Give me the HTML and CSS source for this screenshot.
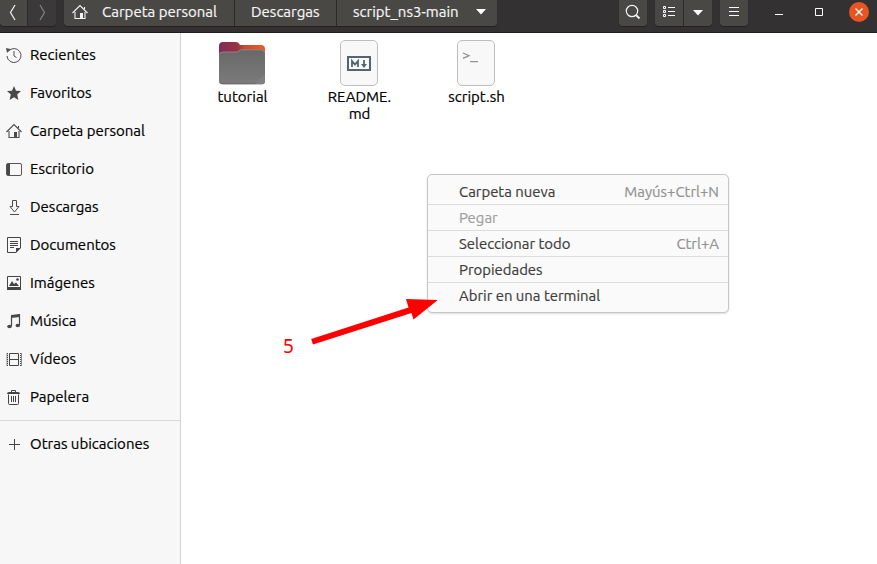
FILE: index.html
```html
<!DOCTYPE html>
<html lang="es">
<head>
<meta charset="utf-8">
<title>script_ns3-main</title>
<link rel="stylesheet" href="styles.css">
</head>
<body>
<header class="headerbar">
  <div class="group nav">
    <button class="btn back"><svg width="28" height="27" viewBox="0 0 28 27"><path d="M15 5l-4.500 7.500 4.500 7.500" fill="none" stroke="#f4f4f4" stroke-width="1.200"/></svg></button>
    <button class="btn forward"><svg width="28" height="27" viewBox="0 0 28 27"><path d="M12 5l4.500 7.500-4.500 7.500" fill="none" stroke="#858382" stroke-width="1.200"/></svg></button>
  </div>
  <div class="group path">
    <button class="btn crumb home"><svg width="16" height="16" viewBox="0 0 16 16"><use href="#house"/></svg><span>Carpeta personal</span></button>
    <button class="btn crumb downloads"><span>Descargas</span></button>
    <button class="btn crumb current"><span>script_ns3-main</span><svg width="10" height="6" viewBox="0 0 10 6"><path d="M0 0h10L5 5.500z" fill="#fff"/></svg></button>
  </div>
  <div class="tools">
    <div class="group"><button class="btn tool"><svg width="28" height="27" viewBox="0 0 28 27"><g fill="none" stroke="#f2f2f2"><circle cx="13" cy="11" r="5.700" stroke-width="1.200"/><path d="M17 15l3.500 3.500" stroke-width="1.800"/></g></svg></button></div>
    <div class="group"><button class="btn tool"><svg width="28" height="27" viewBox="0 0 28 27" fill="none" stroke="#fff"><path d="M8.500 6.500h2v2h-2zM8.500 10.500h2v2h-2zM8.500 14.500h2v2h-2zM13 7.500h7M13 11.500h7M13 15.500h7"/></svg></button><button class="btn tool"><svg width="28" height="27" viewBox="0 0 28 27"><path d="M9 10h10l-5 5.500z" fill="#fff"/></svg></button></div>
    <div class="group"><button class="btn tool"><svg width="28" height="27" viewBox="0 0 28 27"><path d="M9 7.500h10M9 11.500h10M9 15.500h10" stroke="#fff"/></svg></button></div>
  </div>
  <div class="window-controls">
    <svg width="20" height="24" viewBox="0 0 20 24"><path d="M6 14.500h8" stroke="#fff"/></svg>
    <svg width="20" height="24" viewBox="0 0 20 24"><path d="M6.500 8.500h7v7h-7z" fill="none" stroke="#fff"/></svg>
    <svg width="20" height="24" viewBox="0 0 20 24"><circle cx="10" cy="12" r="10" fill="#e95420"/><path d="M6.500 8.500l7 7m0-7l-7 7" stroke="#fff" stroke-width="1.400"/></svg>
  </div>
</header>
<div class="content">
  <nav class="sidebar">
    <ul class="places">
      <li><svg viewBox="0 0 16 16"><g fill="none" stroke="#505050"><path d="M2.500 4.200A7 7 0 1 1 1 9"/><path d="M8 4v5l2.500 1.500"/></g><path d="M0 1l4.500 1L1 6z" fill="#505050"/></svg><span>Recientes</span></li>
      <li><svg viewBox="0 0 16 16"><path d="M8 1l2 4.700 5 .4-3.800 3.400L12.400 15 8 12.200 3.600 15l1.200-5.500L1 6.100l5-.4z" fill="#484848"/></svg><span>Favoritos</span></li>
      <li><svg viewBox="0 0 16 16" color="#4c4c4c"><g id="house"><path d="M.5 9L8 1.500 15.500 9M3 8v6.500h5M13 8v6.500h-2M12.500 5V3" fill="none" stroke="currentColor" stroke-width="1.100"/><path d="M8 9h3v6H8z" fill="currentColor"/></g></svg><span>Carpeta personal</span></li>
      <li><svg viewBox="0 0 16 16"><rect x=".5" y="2.500" width="15" height="12" rx="1.500" fill="none" stroke="#555"/><path d="M1 3h3v11H1z" fill="#484848"/></svg><span>Escritorio</span></li>
      <li><svg viewBox="0 0 16 16"><path d="M6.500 1.500h4v6H13l-4.500 5.500L4 7.500h2.500zM4 15.500h9" fill="none" stroke="#4c4c4c"/></svg><span>Descargas</span></li>
      <li><svg viewBox="0 0 16 16"><path d="M10 15.500H1.500v-15h13V11M4 4.500h8M4 6.500h8M4 8.500h8M4 10.500h4" fill="none" stroke="#444"/><path d="M10 11h5l-5 5z" fill="#444"/></svg><span>Documentos</span></li>
      <li><svg viewBox="0 0 16 16"><path d="M1.500 1.500h13v12h-13z" fill="none" stroke="#444"/><path d="M1 12h14v3H1zM3 11l3-5 2 3 2-1.500L13 11z" fill="#444"/><circle cx="11.500" cy="4.500" r="1.300" fill="#444"/></svg><span>Imágenes</span></li>
      <li><svg viewBox="0 0 16 16"><path d="M5.500 13V3.500l8-1.500v10" fill="none" stroke="#484848" stroke-width="1.200"/><path d="M5 2l9-1v3L5 5z" fill="#484848"/><ellipse cx="3.500" cy="13.500" rx="2.300" ry="1.800" fill="#484848"/><ellipse cx="11.800" cy="12.500" rx="2.200" ry="1.800" fill="#484848"/></svg><span>Música</span></li>
      <li><svg viewBox="0 0 16 16"><path d="M3.500 2.500h9v12h-9zM3.500 8.500h9" fill="none" stroke="#444"/><path d="M1.500 2v13M14.500 2v13" stroke="#444" stroke-dasharray="1 1"/><path d="M1 2v13M15.500 2v13" stroke="#555" stroke-width=".7"/></svg><span>Vídeos</span></li>
      <li><svg viewBox="0 0 16 16"><path d="M2.500 5.500v9q0 1 1 1h8q1 0 1-1v-9M5.500 7v6M7.500 7v6M9.500 7v6M5.500 3V1.500h4V3" fill="none" stroke="#444"/><path d="M1 5q0-2 2-2h9q2 0 2 2z" fill="#444"/></svg><span>Papelera</span></li>
    </ul>
    <ul class="places other">
      <li><svg viewBox="0 0 16 16"><path d="M3 8.500h11M8.500 3v11" stroke="#444"/></svg><span>Otras ubicaciones</span></li>
    </ul>
  </nav>
  <main class="files">
    <figure class="file">
      <svg width="48" height="48" viewBox="0 0 48 48"><defs><linearGradient id="back"><stop offset="0" stop-color="#832b58"/><stop offset=".4" stop-color="#963443"/><stop offset=".55" stop-color="#c84732"/><stop offset="1" stop-color="#f15c22"/></linearGradient><linearGradient id="front" x2="0" y2="1"><stop offset="0" stop-color="#686868"/><stop offset="1" stop-color="#7b7b7b"/></linearGradient></defs><path d="M1 6q0-4 4-4h13q2 0 3 1.500l1 1.500h21q4 0 4 4v12H1z" fill="url(#back)"/><path d="M1 17q0-5 4-5h13q2 0 3-1l1.500-1.500H43q4 0 4 4V41q0 3-3 3H4q-3 0-3-3z" fill="url(#front)"/><path d="M1.500 15q0-3 3-3H18q2 0 3-1l1.500-1.200H43q3 0 3.500 3" fill="none" stroke="#989898" stroke-width=".7"/><path d="M1.500 42q1 2 3 2H44q2 0 2.800-2" fill="none" stroke="#555" stroke-width=".7"/><path d="M47 34v7q0 3-3 3h-7z" fill="#808080"/></svg>
      <figcaption>tutorial</figcaption>
    </figure>
    <figure class="file">
      <svg width="48" height="48" viewBox="0 0 48 48"><rect x="5.500" y=".5" width="37" height="45" rx="4.500" fill="#f8f8f8" stroke="#bebebe"/><rect x="13" y="17" width="22" height="13" fill="none" stroke="#526570" stroke-width="2"/><path d="M17 27v-6l3 3.500 3-3.500v6M29 20v6" fill="none" stroke="#526570" stroke-width="1.800"/><path d="M26 24h6l-3 4z" fill="#526570"/></svg>
      <figcaption>README.<br>md</figcaption>
    </figure>
    <figure class="file">
      <svg width="48" height="48" viewBox="0 0 48 48"><rect x="5.500" y=".5" width="37" height="45" rx="4.500" fill="#f8f8f8" stroke="#bebebe"/><path d="M11 13l6 2.700-6 2.700M18 21.700h8" fill="none" stroke="#929292" stroke-width="1.300"/></svg>
      <figcaption>script.sh</figcaption>
    </figure>
  </main>
</div>
<div class="context-menu">
  <div class="item"><span>Carpeta nueva</span><kbd>Mayús+Ctrl+N</kbd></div>
  <div class="item disabled"><span>Pegar</span></div>
  <div class="item"><span>Seleccionar todo</span><kbd>Ctrl+A</kbd></div>
  <div class="item"><span>Propiedades</span></div>
  <div class="item"><span>Abrir en una terminal</span></div>
</div>
<svg class="arrow" width="130" height="50" viewBox="0 0 130 50"><path d="M1.200 41l97.300-31.500-2.500-8.500L127.800 2 103.500 21.500l-2-6.500L3 46.500z" fill="#f00"/></svg>
<span class="step">5</span>
</body>
</html>
```
FILE: styles.css
```css
* { box-sizing: border-box; }
body {
  margin: 0;
  width: 877px;
  height: 564px;
  overflow: hidden;
  background: #fff;
  color: #000;
  font: 15px/17px "Ubuntu", "Noto Sans", sans-serif;
  -webkit-text-stroke: .2px;
}
svg { display: block; flex: none; }
button { font: inherit; }
span, kbd, figcaption { white-space: nowrap; }
span, kbd { padding-bottom: 2px; }
.headerbar {
  display: flex;
  align-items: flex-start;
  height: 33px;
  background: #343132;
  border-bottom: 1px solid #1d1b1c;
}
.group {
  display: flex;
  height: 26px;
  border-radius: 0 0 4px 4px;
  overflow: hidden;
  box-shadow: 0 1px 1px #242122;
}
.btn {
  display: flex;
  align-items: center;
  height: 26px;
  padding: 0;
  border: 0;
  background: #4a4845;
  color: #f4f4f4;
}
.btn + .btn { border-left: 1px solid #2b292a; }
.nav { width: 56px; margin-right: 8px; }
.back { width: 27px; }
.forward { width: 29px; background: #3b3939; }
.path { width: 433px; }
.crumb { padding-bottom: 2px; }
.home { width: 170px; padding-left: 8px; gap: 14px; }
.downloads { width: 102px; padding-left: 16px; }
.current { width: 161px; padding-left: 16px; }
.current svg { margin-left: auto; margin-right: 11px; }
.tools { display: flex; gap: 8px; margin-left: 122px; }
.tool { width: 28px; }
.tool + .tool { width: 29px; }
.window-controls { display: flex; gap: 20px; margin-left: 21px; }
.content { display: flex; height: 531px; }
.sidebar {
  width: 181px;
  padding-top: 3px;
  background: #f7f7f7;
  border-right: 1px solid #d2d2d2;
}
.places { margin: 0; padding: 0 0 4px; list-style: none; }
.places li { display: flex; align-items: center; height: 38px; padding-left: 6px; gap: 8px; }
.places svg { width: 16px; height: 16px; }
.other { padding-top: 4px; border-top: 1px solid #dadada; }
.files { display: flex; padding: 7px 0 0 3px; }
.file { display: flex; flex-direction: column; align-items: center; width: 117px; margin: 0; }
.file svg { margin-right: 2px; }
.file figcaption { text-align: center; }
.context-menu {
  position: absolute;
  left: 427px;
  top: 174px;
  width: 302px;
  height: 139px;
  padding: 4px 0 0;
  border: 1px solid #c6c6c6;
  border-radius: 5px;
  background: #fafafa;
  color: #3d3d3d;
  box-shadow: 0 1px 2px #0002;
}
.item { display: flex; align-items: center; justify-content: space-between; height: 26px; padding: 1px 9px 0 31px; border-bottom: 1px solid #dcdcdc; font-size: 14.9px; }
.item:last-child { border: 0; padding-top: 0; }
.disabled { color: #a0a0a0; }
kbd { font: inherit; color: #929292; }
.arrow { position: absolute; left: 310px; top: 298px; }
.step { position: absolute; left: 283px; top: 335px; color: #f00; font: 19px/22px "Noto Sans", sans-serif; -webkit-text-stroke: 0; }
```
